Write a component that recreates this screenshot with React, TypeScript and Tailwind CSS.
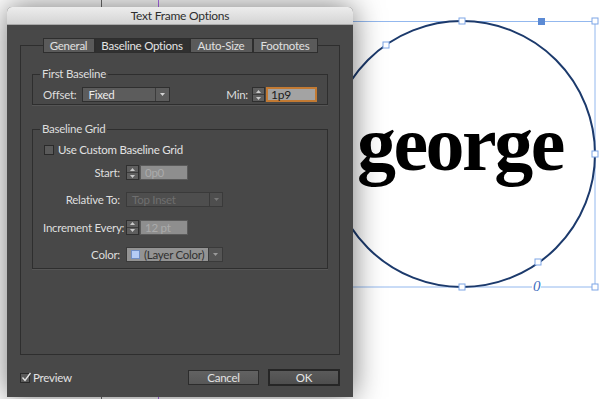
import React from "react";

function Arrow({ dir, color }: { dir: "up" | "down"; color: string }) {
  return (
    <svg width="5" height="3" viewBox="0 0 5 3">
      <path d={dir === "up" ? "M2.5 0L5 3H0z" : "M0 0H5L2.5 3z"} fill={color} />
    </svg>
  );
}

function Spinner() {
  return (
    <div className="flex h-full w-[13px] flex-col border border-[#2f2f2f] bg-[#5e5e5e]">
      <div className="flex flex-1 items-center justify-center border-b border-[#3c3c3c]">
        <Arrow dir="up" color="#c9c9c9" />
      </div>
      <div className="flex flex-1 items-center justify-center">
        <Arrow dir="down" color="#c9c9c9" />
      </div>
    </div>
  );
}

function NumField({ value, active = false }: { value: string; active?: boolean }) {
  return (
    <div className="flex h-[15px] items-stretch">
      <Spinner />
      {active ? (
        <div className="ml-[1px] flex w-[51px] items-center border-2 border-[#c27a33] bg-[#a3a3a3] pl-[3px] text-[12px] text-[#1b1b1b]">
          {value}
        </div>
      ) : (
        <div className="ml-[1px] flex w-[48px] items-center border border-[#5a5a5a] bg-[#8e8e8e] pl-[4px] text-[11.5px] text-[#ababab]">
          {value}
        </div>
      )}
    </div>
  );
}

function GroupBox({ title, className, children }: { title: string; className: string; children: React.ReactNode }) {
  return (
    <div className={`relative border border-[#2e2e2e] shadow-[0_1px_0_#555] ${className}`}>
      <span className="absolute -top-[8px] left-[7px] bg-[#484848] px-[2px] text-[11.5px] leading-[14px] text-[#dedede]">
        {title}
      </span>
      {children}
    </div>
  );
}

export default function App() {
  const tabs = [
    { name: "General", w: "w-[52px]" },
    { name: "Baseline Options", w: "w-[95px]", active: true },
    { name: "Auto-Size", w: "w-[63px]" },
    { name: "Footnotes", w: "w-[65px]" },
  ];

  return (
    <div className="relative h-[399px] w-[600px] overflow-hidden bg-white tracking-[-0.25px] [font-family:Lato,'Open_Sans',sans-serif]">
      {/* canvas */}
      <svg className="absolute inset-0" width="600" height="399" viewBox="0 0 600 399">
        <line x1="101.5" y1="0" x2="101.5" y2="399" stroke="#6d6d6d" strokeWidth="1" />
        <line x1="158.5" y1="0" x2="158.5" y2="399" stroke="#b36ef5" strokeWidth="1" />
        <rect x="329.5" y="21.5" width="265.5" height="265.5" fill="none" stroke="#93b8ee" strokeWidth="1" />
        <circle cx="462" cy="154" r="133" fill="none" stroke="#1c3a6c" strokeWidth="2" />
        {[
          [462, 21],
          [595, 21],
          [595, 154],
          [595, 287],
          [462, 287],
          [386, 45],
          [538, 262],
        ].map(([x, y]) => (
          <rect key={`${x}-${y}`} x={x - 3} y={y - 3} width="6" height="6" fill="#fff" stroke="#7ea6e6" strokeWidth="1" />
        ))}
        <rect x="538" y="18" width="7" height="7" fill="#5b8ad4" />
      </svg>

      <div className="absolute left-[357px] top-[105px] text-[78px] font-bold leading-none tracking-[-2.5px] text-black [font-family:'Liberation_Serif',serif]">
        george
      </div>
      <div className="absolute left-[532px] top-[279px] bg-white px-[1px] text-[15px] italic leading-none text-[#3d6cc0] [font-family:'Liberation_Serif',serif]">
        0
      </div>

      {/* dialog */}
      <div className="absolute left-[7px] top-[7px] flex h-[390px] w-[346px] flex-col overflow-hidden rounded-t-[5px] bg-[#484848] shadow-[0_0_30px_rgba(0,0,0,0.55)]">
        <div className="flex h-[18px] items-center justify-center border-b border-[#a9a9a9] bg-gradient-to-b from-[#ededed] to-[#d4d4d4] text-[12px] text-[#2e2e2e]">
          Text Frame Options
        </div>

        <div className="flex flex-1 flex-col px-[13px] pt-[13px]">
          <div className="relative z-10 flex justify-center">
            {tabs.map((t) => (
              <div
                key={t.name}
                className={`flex h-[15px] items-center justify-center whitespace-nowrap border border-[#2e2e2e] text-[11.5px] ${t.w} ${
                  t.active ? "bg-[#303030] text-[#e4e4e4]" : "bg-[#5a5a5a] text-[#e0e0e0]"
                }`}
              >
                {t.name}
              </div>
            ))}
          </div>

          <div className="-mt-[8px] flex h-[310px] flex-col border border-[#2e2e2e] px-[11px] pt-[28px]">
            <GroupBox title="First Baseline" className="h-[31px] pl-[10px] pr-[10px] pt-[12px]">
              <div className="flex h-[15px] items-center text-[11.5px] text-[#dedede]">
                <span>Offset:</span>
                <div className="ml-[6px] flex h-[15px] w-[88px] items-stretch border border-[#2f2f2f] bg-[#5c5c5c]">
                  <span className="flex flex-1 items-center pl-[5px] text-[#ececec]">Fixed</span>
                  <span className="flex w-[14px] items-center justify-center border-l border-[#3c3c3c]">
                    <Arrow dir="down" color="#d4d4d4" />
                  </span>
                </div>
                <span className="ml-auto mr-[4px]">Min:</span>
                <NumField value="1p9" active />
              </div>
            </GroupBox>

            <GroupBox title="Baseline Grid" className="mt-[24px] h-[140px] pl-[10px] pt-[14px]">
              <div className="ml-[1px] flex h-[12px] items-center text-[11.5px] text-[#e2e2e2]">
                <span className="h-[10px] w-[10px] border border-[#2a2a2a] bg-[#5a5a5a]" />
                <span className="ml-[4px]">Use Custom Baseline Grid</span>
              </div>

              <div className="mt-[8px] grid grid-cols-[77px_auto] items-center gap-x-[6px] gap-y-[10px] whitespace-nowrap text-[11.5px] text-[#dedede]">
                <span className="text-right">Start:</span>
                <NumField value="0p0" />

                <span className="text-right">Relative To:</span>
                <div className="flex h-[15px] w-[97px] items-stretch border border-[#3a3a3a] bg-[#4e4e4e]">
                  <span className="flex flex-1 items-center pl-[5px] text-[#6f6f6f]">Top Inset</span>
                  <span className="flex w-[13px] items-center justify-center border-l border-[#3a3a3a]">
                    <Arrow dir="down" color="#777" />
                  </span>
                </div>

                <span className="text-right">Increment Every:</span>
                <NumField value="12 pt" />

                <span className="text-right">Color:</span>
                <div className="flex h-[15px] w-[97px] items-stretch border border-[#3a3a3a] bg-[#555]">
                  <span className="flex flex-1 items-center bg-[#939393] pl-[4px] text-[#303030]">
                    <span className="mr-[4px] h-[9px] w-[9px] border border-[#6f8ec4] bg-[#b4ccf5]" />
                    (Layer Color)
                  </span>
                  <span className="flex w-[14px] items-center justify-center border-l border-[#3a3a3a]">
                    <Arrow dir="down" color="#9a9a9a" />
                  </span>
                </div>
              </div>
            </GroupBox>
          </div>

          <div className="mt-[14px] flex h-[17px] items-center">
            <span className="relative h-[10px] w-[10px] border border-[#2a2a2a] bg-[#5a5a5a]">
              <svg className="absolute -top-[2px] left-0" width="11" height="11" viewBox="0 0 11 11">
                <path d="M1.5 5.5L4 8.5L9.5 1" fill="none" stroke="#e6e6e6" strokeWidth="1.3" />
              </svg>
            </span>
            <span className="ml-[3px] text-[11.5px] text-[#e2e2e2]">Preview</span>
            <div className="ml-auto flex h-[15px] w-[71px] items-center justify-center border border-[#2c2c2c] bg-gradient-to-b from-[#626262] to-[#575757] text-[11.5px] text-[#e2e2e2]">
              Cancel
            </div>
            <div className="ml-[9px] flex h-[17px] w-[72px] items-center justify-center border-2 border-[#262626] bg-gradient-to-b from-[#5a5a5a] to-[#4e4e4e] text-[11.5px] text-[#e6e6e6]">
              OK
            </div>
          </div>
        </div>
      </div>
    </div>
  );
}
